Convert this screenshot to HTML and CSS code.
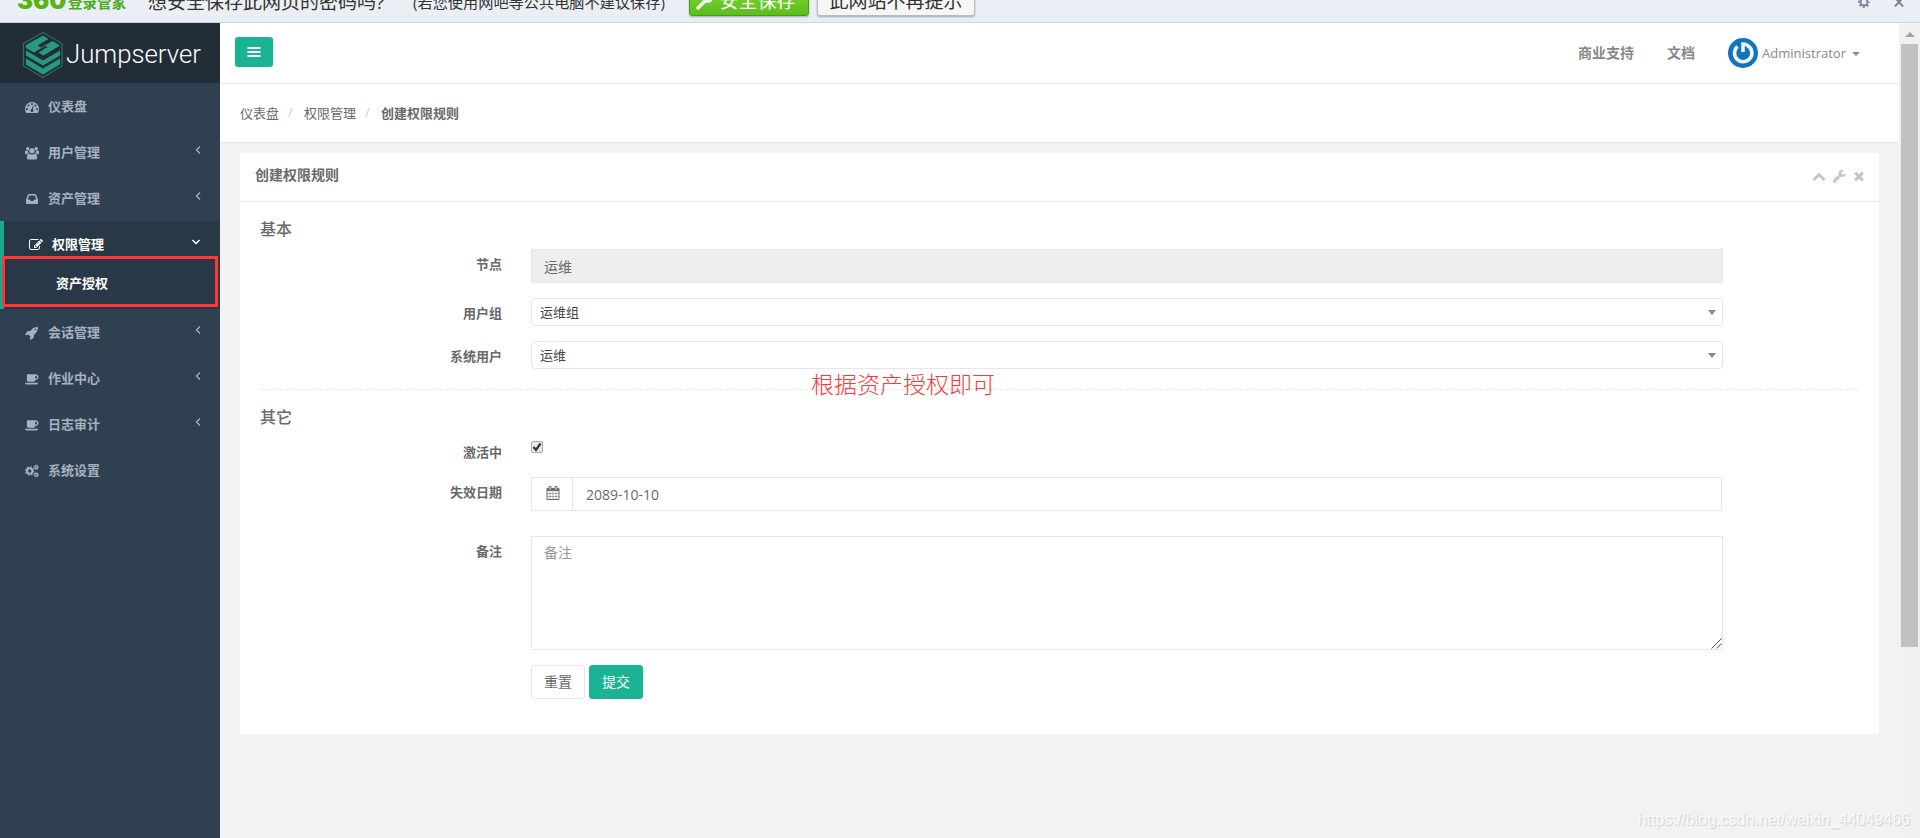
FILE: index.html
```html
<!DOCTYPE html>
<html lang="zh-CN">
<head>
    <meta charset="UTF-8">
    <meta name="viewport" content="width=device-width, initial-scale=1.0">
    <title>Jumpserver</title>
    <link rel="stylesheet" href="styles.css">
</head>
<body>
    <!-- icons -->
    <svg class="defs">
        <symbol id="i-dashboard" viewBox="0 0 1792 1792"><path d="M384 1152q0-53-37.5-90.5t-90.5-37.5-90.5 37.5-37.5 90.5 37.5 90.5 90.5 37.5 90.5-37.5 37.5-90.5zm192-448q0-53-37.5-90.5t-90.5-37.5-90.5 37.5-37.5 90.5 37.5 90.5 90.5 37.5 90.5-37.5 37.5-90.5zm428 481l101-382q6-26-7.5-48.5t-38.5-29.5-48 6.5-30 39.5l-101 382q-60 5-107 43.5t-63 98.5q-20 77 20 146t117 89 146-20 89-117q16-60-6-117t-72-91zm660-33q0-53-37.5-90.5t-90.5-37.5-90.5 37.5-37.5 90.5 37.5 90.5 90.5 37.5 90.5-37.5 37.5-90.5zm-640-640q0-53-37.5-90.5t-90.5-37.5-90.5 37.5-37.5 90.5 37.5 90.5 90.5 37.5 90.5-37.5 37.5-90.5zm448 192q0-53-37.5-90.5t-90.5-37.5-90.5 37.5-37.5 90.5 37.5 90.5 90.5 37.5 90.5-37.5 37.5-90.5zm320 448q0 261-141 483-19 29-54 29h-1402q-35 0-54-29-141-221-141-483 0-182 71-348t191-286 286-191 348-71 348 71 286 191 191 286 71 348z"/></symbol>
        <symbol id="i-users" viewBox="0 0 15 14"><circle cx="3" cy="2.5" r="1.9"/><circle cx="12" cy="2.5" r="1.9"/><circle cx="7.5" cy="4.6" r="2.8"/><path d="M0 7.5V5.8Q0 4.2 1 4.2Q2 5 3.2 4.9Q3.3 6.3 4.3 7.4H3Q2.4 7.6 2 8.3H1Q0 8.3 0 7.5zM15 7.5V5.8Q15 4.2 14 4.2Q13 5 11.8 4.9Q11.7 6.3 10.7 7.4H12Q12.6 7.6 13 8.3H14Q15 8.3 15 7.5zM2 12Q2 7.8 4.5 7.5Q7.5 9.7 10.5 7.5Q13 7.8 13 12Q13 14 11.2 14H3.8Q2 14 2 12z"/></symbol>
        <symbol id="i-inbox" viewBox="64 0 1664 1792"><path d="M1151 960h316q-1-3-2.5-8.5t-2.5-7.5l-212-496h-708l-212 496q-1 3-2.5 8.5t-2.5 7.5h316l95 192h320zm513 30v482q0 26-19 45t-45 19h-1408q-26 0-45-19t-19-45v-482q0-62 25-123l238-552q10-25 36.5-42t52.5-17h832q26 0 52.5 17t36.5 42l238 552q25 61 25 123z"/></symbol>
        <symbol id="i-edit" viewBox="0 0 1792 1792"><path d="M888 1184l116-116-152-152-116 116v56h96v96h56zm440-720q-16-16-33 1l-350 350q-17 17-1 33t33-1l350-350q17-17 1-33zm80 594v190q0 119-84.5 203.5t-203.5 84.5h-832q-119 0-203.5-84.5t-84.5-203.5v-832q0-119 84.5-203.5t203.5-84.5h832q63 0 117 25 15 7 18 23 3 17-9 29l-49 49q-14 14-32 8-23-6-45-6h-832q-66 0-113 47t-47 113v832q0 66 47 113t113 47h832q66 0 113-47t47-113v-126q0-13 9-22l64-64q15-15 35-7t20 29zm-96-738l288 288-672 672h-288v-288zm444 132l-92 92-288-288 92-92q28-28 68-28t68 28l152 152q28 28 28 68t-28 68z"/></symbol>
        <symbol id="i-rocket" viewBox="0 0 1792 1792"><path d="M1440 448q0-40-28-68t-68-28-68 28-28 68 28 68 68 28 68-28 28-68zm224-288q0 249-75.5 430.5t-253.5 360.5q-81 80-195 176l-20 379q-2 16-16 26l-384 224q-7 4-16 4-12 0-23-9l-64-64q-13-14-8-32l85-276-281-281-276 85q-3 1-9 1-14 0-23-9l-64-64q-17-19-5-39l224-384q10-14 26-16l379-20q96-114 176-195 188-187 358-258t431-71q14 0 24 9.5t10 22.5z"/></symbol>
        <symbol id="i-coffee" viewBox="0 0 1920 1792"><path d="M1664 640q0-80-56-136t-136-56h-64v384h64q80 0 136-56t56-136zm-1664 768h1792q0 106-75 181t-181 75h-1280q-106 0-181-75t-75-181zm1856-768q0 159-112.5 271.5t-271.5 112.5h-64v32q0 92-66 158t-158 66h-704q-92 0-158-66t-66-158v-736q0-26 19-45t45-19h1152q159 0 271.5 112.5t112.5 271.5z"/></symbol>
        <symbol id="i-cogs" viewBox="0 0 15 14"><g fill="none" stroke="currentColor"><circle cx="5" cy="7" r="2.9" stroke-width="2.2"/><circle cx="5" cy="7" r="4.4" stroke-width="1.3" stroke-dasharray="1.7 1.756"/><circle cx="12" cy="3" r="1.5" stroke-width="1.4"/><circle cx="12" cy="3" r="2.4" stroke-width="1" stroke-dasharray="1 .885"/><circle cx="12" cy="11" r="1.5" stroke-width="1.4"/><circle cx="12" cy="11" r="2.4" stroke-width="1" stroke-dasharray="1 .885"/></g></symbol>
        <symbol id="i-left" viewBox="0 0 6 10"><path d="M5 1.5L1.5 5L5 8.5" fill="none" stroke="currentColor" stroke-width="1.3"/></symbol>
        <symbol id="i-down" viewBox="0 0 10 6"><path d="M1.5 1L5 4.5L8.5 1" fill="none" stroke="currentColor" stroke-width="1.5"/></symbol>
        <symbol id="i-up" viewBox="0 0 1792 1792"><path d="M1683 1331l-166 165q-19 19-45 19t-45-19l-531-531-531 531q-19 19-45 19t-45-19l-166-165q-19-19-19-45.5t19-45.5l742-741q19-19 45-19t45 19l742 741q19 19 19 45.5t-19 45.5z"/></symbol>
        <symbol id="i-wrench" viewBox="0 0 1792 1792"><path d="M448 1472q0-26-19-45t-45-19-45 19-19 45 19 45 45 19 45-19 19-45zm644-420l-682 682q-37 37-90 37-52 0-91-37l-106-108q-38-36-38-90 0-53 38-91l681-681q39 98 114.5 173.5t173.5 114.5zm634-435q0 39-23 106-47 134-164.5 217.5t-258.5 83.5q-185 0-316.5-131.5t-131.5-316.5 131.5-316.5 316.5-131.5q58 0 121.5 16.5t107.5 46.5q16 11 16 28t-16 28l-293 169v224l193 107q5-3 79-48.5t135.5-81 70.5-35.5q15 0 23.5 10t8.5 25z"/></symbol>
        <symbol id="i-times" viewBox="0 0 1792 1792"><path d="M1490 1322q0 40-28 68l-136 136q-28 28-68 28t-68-28l-294-294-294 294q-28 28-68 28t-68-28l-136-136q-28-28-28-68t28-68l294-294-294-294q-28-28-28-68t28-68l136-136q28-28 68-28t68 28l294 294 294-294q28-28 68-28t68 28l136 136q28 28 28 68t-28 68l-294 294 294 294q28 28 28 68z"/></symbol>
        <symbol id="i-calendar" viewBox="0 0 1792 1792"><path d="M192 1664h288v-288h-288v288zm352 0h320v-288h-320v288zm-352-352h288v-320h-288v320zm352 0h320v-320h-320v320zm-352-384h288v-288h-288v288zm736 736h320v-288h-320v288zm-384-736h320v-288h-320v288zm768 736h288v-288h-288v288zm-384-352h320v-320h-320v320zm-352-864v-288q0-13-9.5-22.5t-22.5-9.5h-64q-13 0-22.5 9.5t-9.5 22.5v288q0 13 9.5 22.5t22.5 9.5h64q13 0 22.5-9.5t9.5-22.5zm736 864h288v-320h-288v320zm-384-384h320v-288h-320v288zm384 0h288v-288h-288v288zm32-480v-288q0-13-9.5-22.5t-22.5-9.5h-64q-13 0-22.5 9.5t-9.5 22.5v288q0 13 9.5 22.5t22.5 9.5h64q13 0 22.5-9.5t9.5-22.5zm384-64v1280q0 52-38 90t-90 38h-1408q-52 0-90-38t-38-90v-1280q0-52 38-90t90-38h128v-96q0-66 47-113t113-47h64q66 0 113 47t47 113v96h384v-96q0-66 47-113t113-47h64q66 0 113 47t47 113v96h128q52 0 90 38t38 90z"/></symbol>
    </svg>

    <div class="savebar">
        <div class="savebar-inner">
            <span class="brand-360">360</span>
            <span class="brand-name">登录管家</span>
            <span class="save-question">想安全保存此网页的密码吗?</span>
            <span class="save-hint">(若您使用网吧等公共电脑不建议保存)</span>
            <button class="save-btn save-yes">
                <svg width="18" height="18" viewBox="0 0 18 18"><path d="M2 16L10 8" stroke="#f0f5ec" stroke-width="3.5" stroke-linecap="round"/><circle cx="12" cy="6" r="5" fill="#f0f5ec"/><circle cx="14" cy="4" r="1.3" fill="#65c522"/></svg>
                安全保存
            </button>
            <button class="save-btn save-no">此网站不再提示</button>
            <span class="savebar-tools">
                <svg width="12" height="12" viewBox="0 0 12 12"><g fill="none" stroke="#75849a"><circle cx="6" cy="6" r="3.5" stroke-width="2"/><circle cx="6" cy="6" r="5.2" stroke-width="1.6" stroke-dasharray="2 2.084" stroke-dashoffset="1"/></g></svg>
                <svg width="10" height="10" viewBox="0 0 10 10"><path d="M1 0.5L9 9.5M9 0.5L1 9.5" stroke="#75849a" stroke-width="2"/></svg>
            </span>
        </div>
    </div>

    <div class="wrapper">
        <div class="sidebar">
            <div class="logo">
                <svg width="220" height="60" viewBox="0 0 220 60">
                    <path d="M43 9.5L62 20.5V43L43 54.5L23.5 43V20.500z" fill="none" stroke="#2d6b63" stroke-width="1.3"/>
                    <g fill="#26997f">
                        <path d="M26 22L43 12.500L48.500 16L37.500 22.500L41 24.500L52.500 18L60 22.500L43.500 32.500L38.500 29.500L47.500 24L45.500 22.800L34 29.500L26 25z"/>
                        <path d="M26 27.500L43 37.500L60 27.500V32.500L43 42.500L26 32.500z"/>
                        <path d="M26 35.500L43 45.500L60 35.500V41.500L43 51.500L26 41.500z"/>
                    </g>
                    <text class="logo-text" x="66" y="40" textLength="135" lengthAdjust="spacingAndGlyphs">Jumpserver</text>
                </svg>
            </div>
            <ul class="menu">
                <li><a><svg class="ico"><use href="#i-dashboard"/></svg>仪表盘</a></li>
                <li><a><svg class="ico"><use href="#i-users"/></svg>用户管理<svg class="arrow"><use href="#i-left"/></svg></a></li>
                <li><a><svg class="ico"><use href="#i-inbox"/></svg>资产管理<svg class="arrow"><use href="#i-left"/></svg></a></li>
                <li class="active">
                    <a><svg class="ico"><use href="#i-edit"/></svg>权限管理<svg class="arrow arrow-down"><use href="#i-down"/></svg></a>
                    <a class="sub">资产授权</a>
                    <span class="mark-box"></span>
                </li>
                <li><a><svg class="ico"><use href="#i-rocket"/></svg>会话管理<svg class="arrow"><use href="#i-left"/></svg></a></li>
                <li><a><svg class="ico"><use href="#i-coffee"/></svg>作业中心<svg class="arrow"><use href="#i-left"/></svg></a></li>
                <li><a><svg class="ico"><use href="#i-coffee"/></svg>日志审计<svg class="arrow"><use href="#i-left"/></svg></a></li>
                <li><a><svg class="ico"><use href="#i-cogs"/></svg>系统设置</a></li>
            </ul>
        </div>

        <div class="main">
            <div class="navbar">
                <button class="toggle"><svg width="14" height="12" viewBox="0 0 14 12"><path d="M0.500 2H13.500M0.500 6H13.500M0.500 10H13.500" stroke="#fff" stroke-width="2"/></svg></button>
                <div class="nav-right">
                    <a class="nav-link">商业支持</a>
                    <a class="nav-link">文档</a>
                    <a class="user">
                        <svg width="30" height="30" viewBox="0 0 30 30"><circle cx="15" cy="15" r="15" fill="#0f75bc"/><path d="M9.500 8.500A8.700 8.700 0 1 0 20 7.800Q18 6 15 6V14" fill="none" stroke="#f4f4f2" stroke-width="3.600"/></svg>
                        <span>Administrator</span>
                        <i class="caret"></i>
                    </a>
                </div>
            </div>

            <div class="breadcrumb">
                <span>仪表盘</span><i>/</i><span>权限管理</span><i>/</i><b>创建权限规则</b>
            </div>

            <div class="ibox">
                <div class="ibox-title">
                    <h5>创建权限规则</h5>
                    <div class="ibox-tools">
                        <svg><use href="#i-up"/></svg>
                        <svg><use href="#i-wrench"/></svg>
                        <svg><use href="#i-times"/></svg>
                    </div>
                </div>
                <form class="ibox-content">
                    <h3>基本</h3>
                    <div class="row">
                        <label>节点</label>
                        <input class="form-control" type="text" value="运维" disabled>
                    </div>
                    <div class="row">
                        <label>用户组</label>
                        <div class="select">运维组<i class="caret"></i></div>
                    </div>
                    <div class="row">
                        <label>系统用户</label>
                        <div class="select">运维<i class="caret"></i></div>
                    </div>
                    <div class="divider"><span class="mark-text">根据资产授权即可</span></div>
                    <h3>其它</h3>
                    <div class="row row-check">
                        <label>激活中</label>
                        <span class="check"><svg width="10" height="10" viewBox="0 0 10 10"><path d="M1.500 5L4 8L8.500 1.500" fill="none" stroke="#333" stroke-width="2.200"/></svg></span>
                    </div>
                    <div class="row row-date">
                        <label>失效日期</label>
                        <div class="input-group">
                            <span class="addon"><svg width="14" height="14"><use href="#i-calendar"/></svg></span>
                            <input class="form-control" type="text" value="2089-10-10">
                        </div>
                    </div>
                    <div class="row">
                        <label>备注</label>
                        <div class="textarea-wrap">
                            <textarea class="form-control" placeholder="备注"></textarea>
                            <svg class="grip" width="11" height="11" viewBox="0 0 11 11"><path d="M0.500 10.500L10.500 0.500M5.500 10.500L10.500 5.500" stroke="#555" stroke-width="1"/></svg>
                        </div>
                    </div>
                    <div class="buttons">
                        <button type="reset" class="btn">重置</button>
                        <button type="button" class="btn btn-primary">提交</button>
                    </div>
                </form>
            </div>
        </div>

        <div class="scrollbar">
            <i class="scroll-up"></i>
            <div class="thumb"></div>
        </div>
    </div>
    <div class="watermark">https://blog.csdn.net/weixin_44049466</div>
</body>
</html>
```
FILE: styles.css
```css
* {
    box-sizing: border-box;
}
body {
    margin: 0;
    height: 838px;
    display: flex;
    flex-direction: column;
    overflow: hidden;
    background-color: #f2f2f2;
    color: #676a6c;
    font-family: "Open Sans", "Noto Sans CJK SC", sans-serif;
    font-size: 13px;
}
button, input, textarea {
    font-family: inherit;
}
svg {
    fill: currentColor;
    flex: none;
}
.defs {
    display: none;
}

/* password bar, scrolled half out of the top */
.savebar {
    height: 23px;
    flex: none;
    display: flex;
    align-items: flex-end;
    overflow: hidden;
    background: linear-gradient(#eceff3, #e9edf6);
    border-bottom: 1px solid #c9d5e8;
}
.savebar-inner {
    width: 100%;
    height: 40px;
    flex: none;
    display: flex;
    align-items: center;
    padding: 0 16px 0 17px;
    color: #333;
    white-space: nowrap;
}
.brand-360 {
    width: 51px;
    color: #55b515;
    font: 900 24px/20px "Inter", sans-serif;
    padding-bottom: 3px;
}
.brand-name {
    width: 80px;
    padding-bottom: 2px;
    color: #4aab1c;
    font-size: 14.5px;
    font-weight: bold;
}
.save-question {
    width: 265px;
    padding-bottom: 3px;
    font-size: 19px;
}
.save-hint {
    width: 276px;
    padding-bottom: 3px;
    font-size: 15.2px;
}
.save-btn {
    height: 30px;
    padding: 0 0 2px;
    margin-bottom: 3px;
    display: flex;
    align-items: center;
    justify-content: center;
    border-radius: 3px;
    font-size: 19px;
    box-shadow: 0 1px 2px rgba(0, 0, 0, .3);
}
.save-yes {
    width: 120px;
    gap: 5px;
    padding-right: 6px;
    margin-right: 8px;
    color: #fff;
    background: linear-gradient(#7fd83a, #5cbd1b);
    border: 1px solid #40a010;
}
.save-yes svg {
    margin-top: 3px;
}
.save-no {
    width: 158px;
    color: #333;
    background: #f6f6f6;
    border: 1px solid #bbb;
}
.savebar-tools {
    display: flex;
    align-items: center;
    gap: 24px;
    margin-left: auto;
}

.wrapper {
    flex: 1;
    display: flex;
}

/* sidebar */
.sidebar {
    width: 220px;
    flex: none;
    background-color: #2f4050;
}
.logo {
    height: 60px;
    background-color: #222d38;
}
.logo-text {
    fill: #fff;
    font-family: Roboto, sans-serif;
    font-size: 26px;
    font-weight: 300;
}
.menu {
    list-style: none;
    margin: 0;
    padding: 0;
}
.menu a {
    height: 46px;
    display: flex;
    align-items: center;
    padding: 0 19px 2px 25px;
    color: #a7b1c2;
    font-weight: bold;
}
.ico {
    width: 14px;
    height: 14px;
    margin: 3px 9px 0 0;
}
.arrow {
    width: 6px;
    height: 10px;
    margin: 0 0 3px auto;
}
.arrow-down {
    width: 10px;
    height: 6px;
    margin-right: 0;
}
.menu .active {
    position: relative;
    height: 88px;
    border-left: 4px solid #19aa8d;
    background-color: #293846;
}
.menu .active a {
    color: #fff;
}
.menu .active .sub {
    height: 32px;
    padding-left: 52px;
}
.mark-box {
    position: absolute;
    left: -2px;
    top: 35px;
    width: 216px;
    height: 51px;
    border: 3px solid #ff3737;
}

/* top navigation */
.main {
    flex: 1;
}
.navbar {
    height: 61px;
    display: flex;
    align-items: center;
    justify-content: space-between;
    padding: 0 39px 2px 15px;
    background-color: #fff;
    border-bottom: 1px solid #e7e7e7;
}
.toggle {
    width: 38px;
    height: 30px;
    padding: 0;
    border: 0;
    border-radius: 3px;
    background-color: #1ab394;
}
.toggle svg {
    display: block;
    margin: auto;
}
.nav-right {
    display: flex;
    align-items: center;
    color: #888;
}
.nav-link {
    margin-right: 33px;
    font-size: 14px;
    font-weight: bold;
}
.user {
    display: flex;
    align-items: center;
    gap: 4px;
    padding-top: 2px;
}
.caret {
    border: 4px solid transparent;
    border-top: 5px solid #888;
    border-bottom: 0;
}
.user .caret {
    border-top-width: 4px;
    margin: 2px 0 0 2px;
}
.breadcrumb {
    height: 59px;
    display: flex;
    align-items: center;
    padding: 0 20px 2px;
    background-color: #fff;
    border-bottom: 1px solid #e7e7e7;
}
.breadcrumb i {
    width: 25px;
    padding-left: 9px;
    color: #ccc;
    font-style: normal;
}

/* form box */
.ibox {
    margin: 10px 20px 0;
    height: 581px;
    background-color: #fff;
}
.ibox-title {
    height: 49px;
    display: flex;
    align-items: center;
    justify-content: space-between;
    padding: 0 13px 2px 15px;
    border-bottom: 1px solid #e7e7e7;
}
.ibox-title h5 {
    margin: 0 0 4px;
    font-size: 14px;
}
.ibox-tools {
    display: flex;
    gap: 6px;
    color: #c4c4c4;
}
.ibox-tools svg {
    width: 14px;
    height: 14px;
}
.ibox-content {
    padding: 0 20px;
}
h3 {
    margin: 0 0 10px;
    padding-top: 17px;
    font-size: 16px;
    font-weight: 500;
    line-height: 20px;
}
.row {
    display: grid;
    grid-template-columns: 242px 1192px;
    gap: 29px;
    margin-bottom: 15px;
}
label {
    font-weight: bold;
    line-height: 30px;
    height: 28px;
    text-align: right;
}
.form-control {
    width: 100%;
    height: 34px;
    padding: 6px 12px;
    border: 1px solid #e5e6e7;
    border-radius: 1px;
    color: #676a6c;
    background-color: #fff;
    font-size: 14px;
}
.form-control:disabled {
    background-color: #eee;
    padding-bottom: 7px;
}
.select {
    height: 28px;
    display: flex;
    align-items: center;
    justify-content: space-between;
    padding: 0 6px 2px 8px;
    border: 1px solid #e5e6e7;
    border-radius: 4px;
    color: #444;
}
.select .caret {
    margin-top: 3px;
}
.divider {
    position: relative;
    height: 1px;
    margin-top: 20px;
    background: repeating-linear-gradient(90deg, #e7e7e7 0 3px, #fff 3px 5px);
}
.mark-text {
    position: absolute;
    left: 551px;
    top: -18px;
    color: #ff3737;
    font-family: "Liberation Serif", "Noto Sans CJK SC", serif;
    font-size: 23px;
    font-weight: 300;
    line-height: 30px;
    white-space: nowrap;
}
.row-check {
    height: 40px;
    margin-bottom: 0;
}
.check {
    width: 12px;
    height: 12px;
    margin-top: 4px;
    display: flex;
    align-items: center;
    justify-content: center;
    border: 1px solid #aaa;
    border-radius: 2px;
    background-color: #e8e8e8;
}
.row-date {
    margin-bottom: 25px;
}
.input-group {
    width: 1191px;
    display: flex;
}
.input-group .form-control {
    padding-left: 13px;
}
.addon {
    width: 41px;
    display: flex;
    flex: none;
    align-items: center;
    justify-content: center;
    padding: 0 0 2px 1px;
    border: 1px solid #e5e6e7;
    border-right: 0;
}
.textarea-wrap {
    position: relative;
}
textarea.form-control {
    height: 114px;
    padding-top: 5px;
    resize: none;
    display: block;
}
textarea::placeholder {
    color: #999;
}
.grip {
    position: absolute;
    right: 1px;
    bottom: 1px;
}
.buttons {
    display: flex;
    gap: 4px;
    padding-left: 271px;
}
.btn {
    width: 54px;
    height: 34px;
    padding: 0 0 2px;
    border: 1px solid #e7e7e7;
    border-radius: 3px;
    background-color: #fff;
    color: #676a6c;
    font-size: 14px;
}
.btn-primary {
    border-color: #1ab394;
    background-color: #1ab394;
    color: #fff;
}

/* page scrollbar */
.scrollbar {
    width: 21px;
    padding: 9px 2px 0;
    background-color: #f1f1f1;
}
.scroll-up {
    display: block;
    width: 10px;
    margin: 0 0 7px 4px;
    border: 5px solid transparent;
    border-top: 0;
    border-bottom-color: #a3a3a3;
}
.thumb {
    height: 603px;
    width: 17px;
    background-color: #c1c1c1;
}

.watermark {
    position: absolute;
    right: 10px;
    bottom: 8px;
    color: #fafafa;
    font: 16px/20px "Liberation Sans", sans-serif;
    text-shadow: 1px 1px 1px #ccc;
}
```
